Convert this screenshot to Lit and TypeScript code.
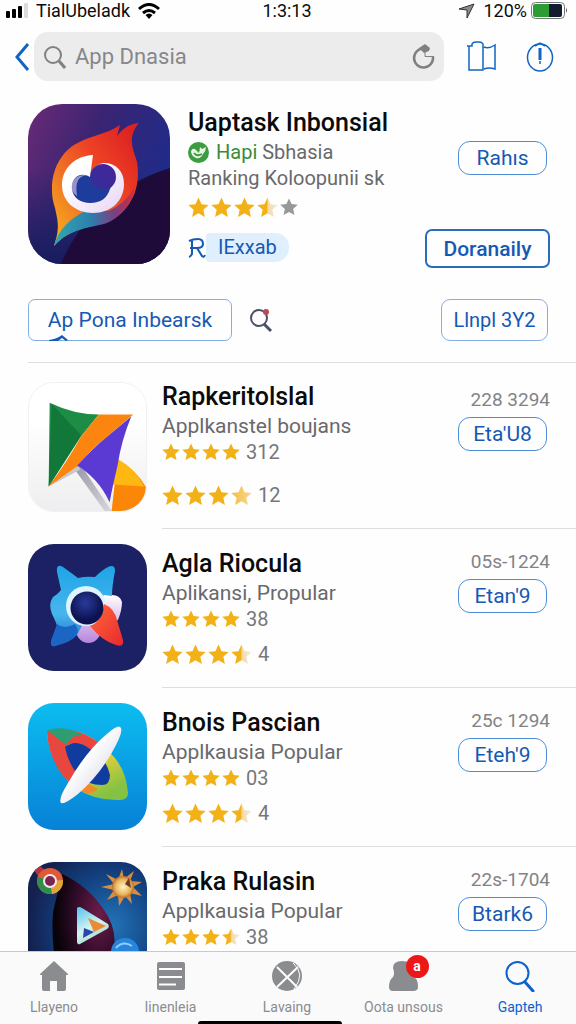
import { LitElement, html, css, svg, nothing } from "lit";
import { customElement, property } from "lit/decorators.js";

type StarKind = "full" | "half" | "soft" | "grey";

interface AppEntry {
  name: string;
  kind: string;
  small: StarKind[];
  smallCount: string;
  large: StarKind[];
  largeCount: string;
  code: string;
  action: string;
  art: unknown;
}

const full4: StarKind[] = ["full", "full", "full", "full"];
const threeHalf: StarKind[] = ["full", "full", "full", "half"];
const threeSoft: StarKind[] = ["full", "full", "full", "soft"];

const heroArt = html`<svg viewBox="0 0 142 160" preserveAspectRatio="none" aria-hidden="true">
  <defs>
    <linearGradient id="hbg" x1="0" y1="0" x2="1" y2="0.5">
      <stop offset="0" stop-color="#6b2a76" /><stop offset="0.45" stop-color="#3a2472" /><stop offset="1" stop-color="#1c2c8c" />
    </linearGradient>
    <linearGradient id="hbl" x1="0" y1="0" x2="0" y2="1">
      <stop offset="0.4" stop-color="#1b1f66" stop-opacity="0" /><stop offset="1" stop-color="#161d5e" />
    </linearGradient>
    <linearGradient id="hfl" x1="0.95" y1="0.1" x2="0.1" y2="0.9">
      <stop offset="0" stop-color="#dc2222" /><stop offset="0.4" stop-color="#ee4325" /><stop offset="0.75" stop-color="#f07a24" /><stop offset="1" stop-color="#f6a51f" />
    </linearGradient>
    <linearGradient id="htl" x1="0" y1="0" x2="1" y2="0">
      <stop offset="0" stop-color="#2fa9ac" /><stop offset="0.45" stop-color="#2c7fae" /><stop offset="0.75" stop-color="#7c3f80" /><stop offset="1" stop-color="#d22a3c" />
    </linearGradient>
    <linearGradient id="hri" x1="0" y1="0" x2="1" y2="1">
      <stop offset="0.3" stop-color="#fff" /><stop offset="1" stop-color="#e6d3f5" />
    </linearGradient>
    <linearGradient id="hpu" x1="0" y1="1" x2="1" y2="0">
      <stop offset="0" stop-color="#2e3299" /><stop offset="1" stop-color="#4a2299" />
    </linearGradient>
  </defs>
  <rect width="142" height="160" fill="url(#hbg)" />
  <rect width="142" height="160" fill="url(#hbl)" />
  <path d="M142 64C96 78 52 112 33 160H142Z" fill="#1e0b3a" />
  <path d="M26 142C32 124 30 118 27 104C24 94 24 90 24 84C24 66 33 49 46 41C62 31 78 31 92 21L89 32C96 23 102 20 111 19C98 34 106 46 109 58C113 82 105 104 82 117C64 124 44 122 26 142Z" fill="url(#hfl)" />
  <path d="M26 142C30 126 42 114 58 107H80C92 102 101 94 107 82C104 100 94 112 79 119C62 124 42 124 26 142Z" fill="url(#htl)" />
  <path d="M65 51C46 52 34 65 34 81C34 98 48 109 65 109C83 109 96 97 96 80C96 67 88 59 76 59C68 60 63 66 62 73Z" fill="url(#hri)" />
  <path d="M62 73C52 67 43 74 44 85C45 94 53 99 62 99C73 99 79 94 82 85L86 76L72 66Z" fill="#1e3c9b" />
  <circle cx="75" cy="73" r="13" fill="url(#hpu)" />
  <path d="M44 86C42 76 50 70 58 71C50 73 47 78 49 92C46 90 45 88 44 86Z" fill="#c9b3e6" opacity="0.7" />
</svg>`;

const kiteArt = html`<svg viewBox="0 0 119 130" preserveAspectRatio="none" aria-hidden="true">
  <defs>
    <linearGradient id="kbg" x1="0" y1="0" x2="0" y2="1"><stop offset="0.3" stop-color="#fff" /><stop offset="1" stop-color="#eeeef0" /></linearGradient>
    <linearGradient id="ksh" x1="0" y1="0" x2="1" y2="1"><stop offset="0" stop-color="#9a98a8" /><stop offset="1" stop-color="#d8d8dc" /></linearGradient>
  </defs>
  <rect width="119" height="130" fill="url(#kbg)" />
  <path d="M48 84L56 88L84 130H77L48 90Z" fill="url(#ksh)" />
  <path d="M20 105L50 84L52 88Z" fill="#c9c6ce" />
  <path d="M90 78Q110 89 119 106Q119 123 98 130H84Z" fill="#fb8608" />
  <path d="M90 77Q109 88 117 105L84 103Z" fill="#ffb811" />
  <path d="M21 20Q46 32 71 32L53 54L20 105Z" fill="#1d8d45" />
  <path d="M23 21L53 53L20 105Z" fill="#12783a" />
  <path d="M71 32H106L80 54Q60 70 50 84L20 105Q40 78 53 54Z" fill="#fb850e" />
  <path d="M104 34Q94 58 90 84Q85 105 82 121Q70 96 49 84Q64 67 80 54Z" fill="#5a3ad2" />
</svg>`;

const starArt = html`<svg viewBox="0 0 119 127" preserveAspectRatio="none" aria-hidden="true">
  <defs>
    <linearGradient id="sb" x1="0" y1="0" x2="0" y2="1"><stop offset="0" stop-color="#1fa4e6" /><stop offset="0.6" stop-color="#48b6ee" /><stop offset="1" stop-color="#1768c4" /></linearGradient>
    <linearGradient id="sp" x1="0" y1="0" x2="0" y2="1"><stop offset="0" stop-color="#fff" /><stop offset="1" stop-color="#b884dc" /></linearGradient>
    <linearGradient id="sr" x1="0" y1="0" x2="1" y2="1"><stop offset="0" stop-color="#ff6a3a" /><stop offset="1" stop-color="#e8282e" /></linearGradient>
    <radialGradient id="sc" cx="0.45" cy="0.35"><stop offset="0" stop-color="#2a3a9c" /><stop offset="1" stop-color="#0d1352" /></radialGradient>
  </defs>
  <rect width="119" height="127" fill="#1c2065" />
  <path d="M46 80Q48 98 60 99Q70 99 74 86L90 76Q94 66 94 58Q92 51 84 51H70L44 60Z" fill="url(#sp)" />
  <path d="M35 23Q28 19 29 28L33 46Q30 50 25 53Q20 60 24 70Q28 78 29 82L23 97Q22 105 30 101Q42 98 49 91L60 70L76 51L84 52Q84 42 87 27Q87 20 80 23Q74 26 67 33Q58 32 50 34Q42 28 35 23Z" fill="url(#sb)" />
  <path d="M29 80L23 97Q22 105 30 101Q44 98 49 90Q51 86 47 80Q36 86 29 80Z" fill="#1b66c4" />
  <circle cx="58" cy="62" r="20" fill="#dff4ff" />
  <path d="M76 60Q86 64 89 76L95 96Q96 104 88 101Q74 97 62 82Q74 78 76 60Z" fill="url(#sr)" />
  <circle cx="59" cy="64" r="16.500" fill="url(#sc)" />
</svg>`;

const orbitArt = html`<svg viewBox="0 0 119 127" preserveAspectRatio="none" aria-hidden="true">
  <defs>
    <linearGradient id="ob" x1="0" y1="0" x2="0" y2="1"><stop offset="0" stop-color="#0cbdf0" /><stop offset="1" stop-color="#0781d6" /></linearGradient>
    <linearGradient id="oy" x1="0" y1="0" x2="0.6" y2="1"><stop offset="0" stop-color="#f3c22a" /><stop offset="0.6" stop-color="#e0cf37" /><stop offset="1" stop-color="#84c244" /></linearGradient>
    <linearGradient id="ow" x1="0" y1="0" x2="1" y2="1"><stop offset="0.4" stop-color="#fff" /><stop offset="1" stop-color="#c9c4d8" /></linearGradient>
  </defs>
  <rect width="119" height="127" fill="url(#ob)" />
  <path d="M19 30Q18 26 26 26Q56 25 74 43Q98 60 100 90Q100 97 92 97Q66 98 46 84Q22 62 19 30Z" fill="url(#oy)" />
  <path d="M19 30Q18 26 26 26Q54 25 72 41L62 50Q40 34 38 46L50 74L42 80Q22 62 19 30Z" fill="#e8473f" />
  <path d="M19 27Q40 22 54 32Q46 30 38 42Q28 34 19 27Z" fill="#2f9c72" />
  <path d="M46 84L54 74Q60 82 70 86Q66 90 60 91Q52 88 46 84Z" fill="#f08a2c" />
  <path d="M37 44Q48 35 62 46Q78 54 82 72Q82 82 74 82Q60 82 50 72Q40 60 37 44Z" fill="#103c9f" />
  <path d="M92 24Q96 26 88 42Q74 70 50 91Q36 102 33 100Q30 96 40 80Q58 48 80 30Q90 22 92 24Z" fill="url(#ow)" />
</svg>`;

const spaceArt = html`<svg viewBox="0 0 119 127" preserveAspectRatio="none" aria-hidden="true">
  <defs>
    <radialGradient id="pb" cx="0.7" cy="0.5" r="0.7"><stop offset="0" stop-color="#2274b8" /><stop offset="0.6" stop-color="#123f7e" /><stop offset="1" stop-color="#14204e" /></radialGradient>
    <radialGradient id="pp" cx="0.75" cy="0.35" r="0.7"><stop offset="0" stop-color="#6d1c4b" /><stop offset="0.6" stop-color="#2d0b26" /><stop offset="1" stop-color="#080308" /></radialGradient>
    <linearGradient id="pt" x1="0" y1="0" x2="0.5" y2="1"><stop offset="0" stop-color="#4fc3f0" /><stop offset="0.6" stop-color="#d6f3ee" /><stop offset="1" stop-color="#9fd9cf" /></linearGradient>
    <radialGradient id="pg"><stop offset="0" stop-color="#fff4c8" /><stop offset="0.7" stop-color="#e9b45a" /><stop offset="1" stop-color="#c26d2a" /></radialGradient>
  </defs>
  <rect width="119" height="127" fill="url(#pb)" />
  <path d="M34 12Q60 24 76 48Q92 70 84 98L70 127H34Q22 88 25 50Z" fill="url(#pp)" />
  <path d="M6 8L12 4L22 12L14 20Z" fill="#b8323e" />
  <circle cx="22" cy="19" r="13" fill="#de5a34" />
  <path d="M10 15A13 13 0 0 0 24 32L22 19Z" fill="#2f8f4a" />
  <path d="M24 32A13 13 0 0 0 35 18L22 19Z" fill="#e3a33a" />
  <circle cx="22" cy="19" r="7" fill="#f5e8ea" /><circle cx="22" cy="19" r="5" fill="#7c2450" />
  <path d="M94 7L96 17L106 9L102 19L114 20L105 25L114 34L102 31L104 42L97 34L91 44L90 33L79 38L86 28L73 25L86 22L78 12L90 18Z" fill="#d98d42" />
  <circle cx="95" cy="25" r="11" fill="url(#pg)" />
  <path d="M101 16L103 26L97 22Z" fill="#6b3a26" />
  <path d="M49 46Q51 44 54 46L80 62Q82 65 79 67L52 82Q49 83 49 79Z" fill="url(#pt)" />
  <path d="M60 56L78 64L66 70Z" fill="#e98a35" /><path d="M56 66L66 70L55 76Z" fill="#2947a8" />
  <circle cx="97" cy="90" r="14" fill="#2785dc" /><path d="M88 86Q95 78 104 84" stroke="#8fd0ff" stroke-width="2" fill="none" />
</svg>`;

const apps: AppEntry[] = [
  { name: "Rapkeritolslal", kind: "Applkanstel boujans", small: full4, smallCount: "312", large: threeSoft, largeCount: "12", code: "228 3294", action: "Eta'U8", art: kiteArt },
  { name: "Agla Riocula", kind: "Aplikansi, Propular", small: full4, smallCount: "38", large: threeHalf, largeCount: "4", code: "05s-1224", action: "Etan'9", art: starArt },
  { name: "Bnois Pascian", kind: "Applkausia Popular", small: full4, smallCount: "03", large: threeHalf, largeCount: "4", code: "25c 1294", action: "Eteh'9", art: orbitArt },
  { name: "Praka Rulasin", kind: "Applkausia Popular", small: threeHalf, smallCount: "38", large: threeHalf, largeCount: "4", code: "22s-1704", action: "Btark6", art: spaceArt },
];

const tabs = [
  { label: "Llayeno", icon: svg`<path d="M15 1L1 14Q0 15 2 15H3V29Q3 31 5 31H11V21H18V31H25Q27 31 27 29V15H28Q30 15 29 14Z" fill="currentColor" />` },
  { label: "Iinenleia", icon: svg`<rect x="1" y="2" width="28" height="28" rx="2" fill="currentColor" /><path d="M3 9H26M3 17H26M3 24.500H20" stroke="#fff" stroke-width="2" />` },
  { label: "Lavaing", icon: svg`<circle cx="15" cy="16" r="15" fill="currentColor" /><path d="M5 7L25 27M26 7L5 27" stroke="#fff" stroke-width="2" /><path d="M21 3Q34 14 22 29" stroke="#fff" stroke-width="1" fill="none" />` },
  { label: "Oota unsous", icon: svg`<path d="M4 8Q4 1 13 1Q23 1 23 9Q22 16 26 18Q29 20 29 27Q29 31 24 31H4Q0 31 0 27Q0 20 4 17Q6 14 4 8Z" fill="currentColor" />`, badge: "a" },
  { label: "Gapteh", icon: svg`<circle cx="12.500" cy="13" r="11" fill="none" stroke="currentColor" stroke-width="2" /><path d="M20 22L28 31" stroke="currentColor" stroke-width="3" stroke-linecap="round" />`, active: true },
];

@customElement("star-row")
export class StarRow extends LitElement {
  @property({ attribute: false }) stars: StarKind[] = [];
  @property() count = "";
  @property({ type: Boolean, reflect: true }) large = false;

  static styles = css`
    :host { display: flex; align-items: center; gap: 2px; height: 24px; color: #77777a; font-size: 20px; line-height: 24px; }
    .star { width: 18px; height: 18px; flex: none; display: block; }
    :host([large]) .star { width: 21px; height: 21px; }
    :host([large]) .grey { width: 18px; height: 18px; }
    .count { margin-left: 4px; }
  `;

  render() {
    return html`${this.stars.map((kind) => {
      const fill = kind === "full" ? "#f3b118" : kind === "grey" ? "#98989b" : `url(#${kind})`;
      return html`<svg class="star ${kind}" viewBox="0 0 20 20" aria-hidden="true">
        <defs>
          <linearGradient id="half"><stop offset="0.45" stop-color="#f3b118" /><stop offset="0.55" stop-color="#f6dba6" /><stop offset="1" stop-color="#ececec" /></linearGradient>
          <linearGradient id="soft"><stop offset="0" stop-color="#f3bd40" /><stop offset="1" stop-color="#f8d88e" /></linearGradient>
        </defs>
        <path d="M10 0.500L12.900 6.800L19.700 7.500L14.600 12.100L16.100 19L10 15.500L3.900 19L5.400 12.100L0.300 7.500L7.100 6.800Z" fill=${fill} />
      </svg>`;
    })}${this.count ? html`<span class="count">${this.count}</span>` : nothing}`;
  }
}

@customElement("app-root")
export class AppRoot extends LitElement {
  static styles = css`
    :host { display: flex; flex-direction: column; height: 100vh; overflow: hidden; background: #fefefe; color: #0b0b0c; font-family: Roboto, "Liberation Sans", sans-serif; }
    * { box-sizing: border-box; }
    button, input { font: inherit; color: inherit; }
    button { background: none; border: 0; padding: 0; cursor: pointer; }
    h1, h2, p, ul { margin: 0; padding: 0; }
    svg { display: block; }

    .status { display: grid; grid-template-columns: 1fr auto 1fr; align-items: center; height: 21px; padding: 0 8px 0 6px; font-size: 18px; line-height: 21px; flex: none; }
    .status-side { display: flex; align-items: center; gap: 8px; }
    .status-end { justify-content: flex-end; gap: 4px; }
    .push { margin-right: 4px; }

    .search-bar { display: flex; align-items: center; padding: 11px 22px 0 14px; flex: none; color: #1264c4; }
    .back { margin-right: 4px; }
    .field { display: flex; align-items: center; gap: 9px; flex: 1; min-width: 0; height: 49px; padding: 0 8px 0 10px; border-radius: 14px; background: #ececed; color: #808083; }
    .field input { flex: 1; min-width: 0; border: 0; outline: 0; padding: 0; background: none; font-size: 22px; line-height: 30px; color: #808083; }
    .field input::placeholder { color: #87878a; opacity: 1; }
    .tools { display: flex; gap: 30px; margin-left: 23px; }

    .content { flex: 1; min-height: 0; overflow-y: auto; scrollbar-width: none; }
    .hero { display: grid; grid-template-columns: 142px 1fr auto; column-gap: 18px; padding: 23px 26px 0 28px; }
    .hero-icon { height: 160px; border-radius: 34px; overflow: hidden; }
    .hero-icon svg, .icon svg { width: 100%; height: 100%; }
    .hero-text { padding-top: 3px; white-space: nowrap; min-width: 0; }
    .hero-title { font-size: 25px; line-height: 32px; font-weight: 500; }
    .line { font-size: 20px; line-height: 26px; color: #69696c; display: flex; align-items: center; gap: 7px; }
    .line + .line { margin-bottom: 4px; }
    .green { color: #3a8a3a; }
    .tag { display: inline-flex; align-items: center; height: 29px; margin-top: 14px; color: #1659b4; font-size: 20px; line-height: 29px; text-decoration: none; }
    .tag-label { padding: 0 12px; border-radius: 4px 14px 14px 4px; background: #e0effe; }
    .hero-actions { display: flex; flex-direction: column; align-items: flex-end; justify-content: space-between; padding-top: 37px; margin-bottom: -4px; }

    .pill { height: 34px; min-width: 89px; margin-right: 3px; border: 1px solid #4d8dd6; border-radius: 12px; color: #1659b4; font-size: 21px; line-height: 30px; white-space: nowrap; }
    .pill.strong { height: 39px; min-width: 125px; margin-right: 0; border-width: 2px; border-color: #2a6dba; border-radius: 7px; font-weight: 500; }
    .pill.tall { height: 42px; min-width: 107px; margin-right: 2px; border-color: #85aede; border-radius: 9px; }
    .pill.last { font-size: 20px; }
    .pill.wide { min-width: 204px; border-radius: 7px; margin: 0; position: relative; }
    .notch { position: absolute; left: 20px; bottom: -1px; }

    .filters { display: flex; align-items: center; padding: 35px 26px 21px 28px; }
    .find { margin-left: 16px; }
    .filters .last { margin-left: auto; }

    .list { list-style: none; }
    .row { display: grid; grid-template-columns: 119px 1fr 90px; column-gap: 15px; padding-left: 28px; }
    .icon { height: 127px; margin: 16px 0; border-radius: 26px; overflow: hidden; }
    .row-body { display: grid; grid-template-columns: 1fr auto; border-top: 1px solid #dededf; grid-column: 2 / 4; padding: 20px 26px 0 0; }
    .name { font-size: 25px; line-height: 30px; font-weight: 500; white-space: nowrap; }
    .kind { font-size: 21px; line-height: 28px; color: #69696c; white-space: nowrap; }
    .second { margin-top: 11px; }
    .side { display: flex; flex-direction: column; align-items: flex-end; gap: 4px; }
    .code { font-size: 19px; line-height: 26px; color: #838386; }

    .row.first { border-top: 1px solid #dededf; margin-left: 28px; padding-left: 0; }
    .first .icon { height: 130px; margin: 19px 0 16px; border: 1px solid #f1f1f2; }
    .first .row-body { border-top: 0; padding-top: 19px; }
    .first .second { margin-top: 19px; }
    .first .side { padding-top: 5px; }

    .tabbar { flex: none; border-top: 1px solid #c9c9cb; background: #fafafb; }
    .tabs { display: flex; justify-content: space-between; padding: 8px 16px 5px 14px; }
    .tab { display: flex; flex-direction: column; align-items: center; gap: 6px; width: 80px; color: #8b8c8f; font-size: 14px; line-height: 18px; white-space: nowrap; }
    .tab.active { color: #0a62d0; }
    .tab-icon { position: relative; }
    .badge { position: absolute; top: -5px; left: 17px; width: 23px; height: 23px; border-radius: 50%; background: #ee1717; color: #fff; font-size: 14px; line-height: 22px; font-weight: 700; text-align: center; }
    .home { width: 25%; height: 3px; margin: 0 auto; border-radius: 3px 3px 0 0; background: #000; transform: translateX(-18px); }
  `;

  private renderApp(app: AppEntry, index: number) {
    return html`<li class="row ${index === 0 ? "first" : ""}">
      <div class="icon">${app.art}</div>
      <div class="row-body">
        <div>
          <h2 class="name">${app.name}</h2>
          <p class="kind">${app.kind}</p>
          <star-row .stars=${app.small} count=${app.smallCount}></star-row>
          <star-row class="second" large .stars=${app.large} count=${app.largeCount}></star-row>
        </div>
        <div class="side">
          <span class="code">${app.code}</span>
          <button class="pill" type="button">${app.action}</button>
        </div>
      </div>
    </li>`;
  }

  render() {
    return html`
      <div class="status">
        <div class="status-side">
          <svg width="22" height="16" viewBox="0 0 22 16" aria-hidden="true">
            <rect x="0" y="8" width="4" height="7" rx="1" /><rect x="6" y="6" width="4" height="9" rx="1" /><rect x="12" y="3" width="4" height="12" rx="1" /><rect x="18" y="0" width="4" height="15" rx="1" fill="#dcdcdc" />
          </svg>
          <span>TialUbeladk</span>
          <svg width="22" height="16" viewBox="0 0 22 16" fill="none" stroke="#000" stroke-width="3" aria-hidden="true">
            <path d="M1 6Q11 -3 21 6" /><path d="M5 10Q11 5 17 10" /><path d="M7.500 12Q11 9 14.500 12L11 16Z" fill="#000" stroke="none" />
          </svg>
        </div>
        <span>1:3:13</span>
        <div class="status-side status-end">
          <svg class="push" width="17" height="16" viewBox="0 0 17 16" aria-hidden="true"><path d="M1 6L16 1L9 15L9 7Z" fill="#8a8a8c" stroke="#333" stroke-width="1" /></svg>
          <span>120%</span>
          <svg width="37" height="17" viewBox="0 0 37 17" aria-hidden="true">
            <rect x="0.500" y="0.500" width="33" height="16" rx="4" fill="#fff" stroke="#777" /><rect x="2" y="2" width="18" height="13" rx="2" fill="#2c9c34" /><path d="M18 2H29Q31 2 31 4V13Q31 15 29 15H18Z" fill="#141c30" /><path d="M35 6Q37 8 35 11Z" fill="#555" />
          </svg>
        </div>
      </div>

      <div class="search-bar">
        <button class="back" type="button" aria-label="Back">
          <svg width="16" height="28" viewBox="0 0 16 28" fill="none" stroke="currentColor" stroke-width="3"><path d="M14 1L3 14L14 27" /></svg>
        </button>
        <label class="field">
          <svg width="22" height="24" viewBox="0 0 22 24" fill="none" stroke="currentColor" stroke-width="2" aria-hidden="true"><circle cx="9" cy="10" r="8" /><path d="M15 16L21 23" stroke-width="3" /></svg>
          <input type="search" placeholder="App Dnasia" aria-label="Search apps" />
          <svg width="24" height="26" viewBox="0 0 24 26" aria-hidden="true"><path d="M21 13A9.500 9.500 0 1 1 11 4.500" fill="none" stroke="currentColor" stroke-width="2.500" /><path d="M7 4L13 0L18 4L17 7L12 9L9 6Z" fill="currentColor" /><path d="M13 8V12.500H22" fill="none" stroke="currentColor" stroke-width="1" /></svg>
        </label>
        <div class="tools">
          <button type="button" aria-label="Library">
            <svg width="29" height="31" viewBox="0 0 29 31" fill="none" stroke="currentColor" stroke-width="1.500"><path d="M0 5H5V3Q6 1 9 1H12Q15 1 16 3V29H2V5M17 6Q22 8 28 4V28Q22 26 17 28" /></svg>
          </button>
          <button type="button" aria-label="Notices">
            <svg width="28" height="30" viewBox="0 0 28 30" fill="none" stroke="currentColor" stroke-width="1.500"><ellipse cx="14" cy="15.500" rx="12.500" ry="13.500" /><path d="M14 6V18" stroke-width="3" /><path d="M14 19V22M9 4L14 1L19 4" /></svg>
          </button>
        </div>
      </div>

      <main class="content">
        <section class="hero">
          <div class="hero-icon">${heroArt}</div>
          <div class="hero-text">
            <h1 class="hero-title">Uaptask Inbonsial</h1>
            <p class="line">
              <svg width="21" height="21" viewBox="0 0 21 21" aria-hidden="true"><circle cx="10.500" cy="10.500" r="10.500" fill="#3d9c40" /><path d="M3 9Q5 5 8 8L11 11L12 5L14 7L18 5Q18 9 15 12Q13 17 8 16Q3 14 3 9Z" fill="#e6f5e4" /><path d="M6 11Q9 15 14 12M8 5L11 9" stroke="#3d9c40" stroke-width="2" fill="none" /></svg>
              <span><span class="green">Hapi</span> Sbhasia</span>
            </p>
            <p class="line">Ranking Koloopunii sk</p>
            <star-row large .stars=${["full", "full", "full", "half", "grey"] as StarKind[]}></star-row>
            <a class="tag" href="#">
              <svg width="18" height="20" viewBox="0 0 18 20" fill="none" stroke="currentColor" stroke-width="2" aria-hidden="true"><path d="M1 3Q5 1 10 1Q15 1 15 6Q15 10 9 10H2M4 3V15Q4 18 1 19M9 10L14 18Q16 20 17 17" /></svg>
              <span class="tag-label">IExxab</span>
            </a>
          </div>
          <div class="hero-actions">
            <button class="pill" type="button">Rahıs</button>
            <button class="pill strong" type="button">Doranaily</button>
          </div>
        </section>

        <div class="filters">
          <button class="pill tall wide" type="button">Ap Pona Inbearsk
            <svg class="notch" width="22" height="6" viewBox="0 0 22 6" aria-hidden="true"><path d="M0 5Q8 4 13 0L19 5L17 6L13 3L9 6H0Z" fill="#1659b4" /></svg>
          </button>
          <button class="find" type="button" aria-label="Find">
            <svg width="26" height="26" viewBox="0 0 26 26" fill="none" stroke="#4a5068" stroke-width="2"><circle cx="11" cy="11" r="8" /><path d="M16 17L23 24" stroke-width="3" /><circle cx="18" cy="5" r="3" fill="#b84a58" stroke="none" /></svg>
          </button>
          <button class="pill tall last" type="button">Llnpl 3Y2</button>
        </div>

        <ul class="list">${apps.map((app, i) => this.renderApp(app, i))}</ul>
      </main>

      <footer class="tabbar">
        <nav class="tabs">
          ${tabs.map((tab) => html`<button class="tab ${tab.active ? "active" : ""}" type="button">
            <span class="tab-icon">
              <svg width="30" height="32" viewBox="0 0 30 32" aria-hidden="true">${tab.icon}</svg>
              ${tab.badge ? html`<span class="badge">${tab.badge}</span>` : nothing}
            </span>
            <span>${tab.label}</span>
          </button>`)}
        </nav>
        <div class="home"></div>
      </footer>
    `;
  }
}
